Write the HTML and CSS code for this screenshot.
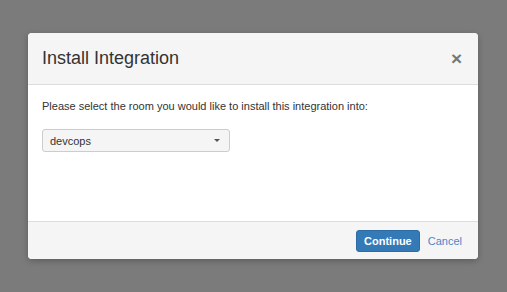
FILE: index.html
```html
<!DOCTYPE html>
<html lang="en">
  <head>
    <meta charset="utf-8" />
    <meta name="viewport" content="width=device-width, initial-scale=1.0" />
    <title>Install Integration</title>
    <link rel="stylesheet" href="styles.css">
  </head>
  <body>
    <div class="backdrop">
      <div class="modal">
        <div class="modal-header">
          <h4 class="modal-title">Install Integration</h4>
          <button type="button" class="close">&times;</button>
        </div>
        <div class="modal-body">
          <p>Please select the room you would like to install this integration into:</p>
          <div class="select">
            <span>devcops</span>
            <span class="caret"></span>
          </div>
        </div>
        <div class="modal-footer">
          <button type="button" class="btn-primary">Continue</button>
          <a href="#" class="cancel">Cancel</a>
        </div>
      </div>
    </div>
  </body>
</html>
```

FILE: styles.css
```css
:root {
  --overlay: #7b7b7b;
  --panel: #f5f5f5;
  --line: #dddddd;
  --text: #333333;
  --blue: #337ab7;
  --link: #4a86c8;
}

* {
  box-sizing: border-box;
}

body {
  margin: 0;
  font-family: "Liberation Sans", Arial, Helvetica, sans-serif;
  color: var(--text);
}

.backdrop {
  width: 100vw;
  height: 100vh;
  background-color: var(--overlay);
  display: flex;
  align-items: center;
  justify-content: center;
  padding-right: 1px;
}

.modal {
  width: 450px;
  background-color: #ffffff;
  border-radius: 4px;
  box-shadow: 0 2px 6px rgba(0, 0, 0, 0.25);
  overflow: hidden;
}

.modal-header {
  display: flex;
  align-items: center;
  justify-content: space-between;
  height: 52px;
  padding: 0 16px 0 14px;
  background-color: var(--panel);
  border-bottom: 1px solid var(--line);
}

.modal-title {
  margin: 0;
  font-size: 18px;
  font-weight: normal;
}

.close {
  border: none;
  background: none;
  padding: 0;
  font-family: inherit;
  font-size: 19px;
  font-weight: bold;
  color: #777777;
  cursor: pointer;
  line-height: 1;
}

.modal-body {
  height: 136px;
  padding: 13px 14px;
}

.modal-body p {
  margin: 0 0 15px;
  font-size: 11px;
  line-height: 16px;
}

.select {
  display: flex;
  align-items: center;
  justify-content: space-between;
  width: 188px;
  height: 23px;
  padding: 0 9px 0 7px;
  font-size: 11px;
  background-color: var(--panel);
  border: 1px solid #cccccc;
  border-radius: 3px;
}

.caret {
  width: 0;
  height: 0;
  border-left: 3px solid transparent;
  border-right: 3px solid transparent;
  border-top: 3px solid #555555;
}

.modal-footer {
  display: flex;
  align-items: center;
  justify-content: flex-end;
  gap: 8px;
  height: 38px;
  padding: 1px 16px 0 0;
  background-color: var(--panel);
  border-top: 1px solid var(--line);
}

.btn-primary {
  height: 22px;
  padding: 0 7px;
  border: 1px solid #2e6da4;
  border-radius: 3px;
  background-color: var(--blue);
  color: #ffffff;
  font-family: inherit;
  font-size: 11px;
  font-weight: bold;
  cursor: pointer;
}

.cancel {
  font-size: 11px;
  color: var(--link);
  text-decoration: none;
}
```
